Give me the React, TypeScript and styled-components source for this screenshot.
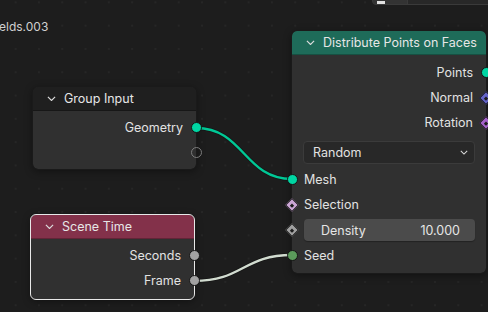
import styled, { createGlobalStyle } from 'styled-components';

const GlobalStyle = createGlobalStyle`
  html, body {
    margin: 0;
    padding: 0;
    background: #1d1d1d;
  }
  body {
    font-family: Inter, "Noto Sans", sans-serif;
  }
`;

const Canvas = styled.div`
  position: relative;
  width: 488px;
  height: 312px;
  overflow: hidden;
  background-color: #1d1d1d;
  background-image: radial-gradient(circle, #262626 1px, transparent 1.2px);
  background-size: 23.3px 23.3px;
  background-position: 4px 14px;
`;

const TopBar = styled.div`
  position: absolute;
  left: 372px;
  top: -6px;
  width: 130px;
  height: 9px;
  background: #282828;
  border: 1px solid #3a3a3a;
  border-radius: 4px;
  display: flex;
`;

const TopBarButton = styled.div`
  width: 30px;
  height: 100%;
  background: #333;
  border-right: 1px solid #3a3a3a;
  display: flex;
  align-items: flex-end;
  padding-left: 4px;
  &::after {
    content: '';
    width: 8px;
    height: 3px;
    background: #e0e0e0;
  }
`;

const TreeName = styled.div`
  position: absolute;
  left: -1px;
  top: 19px;
  font-size: 12px;
  color: #d0d0d0;
`;

const Links = styled.svg`
  position: absolute;
  left: 0;
  top: 0;
  width: 488px;
  height: 312px;
  pointer-events: none;
`;

const Node = styled.div<{ $x: number; $y: number; $w: number; $selected?: boolean }>`
  position: absolute;
  left: ${(p) => p.$x}px;
  top: ${(p) => p.$y}px;
  width: ${(p) => p.$w}px;
  background: #303030;
  border-radius: 5px;
  box-shadow: 0 2px 8px rgba(0, 0, 0, 0.45);
  outline: ${(p) => (p.$selected ? '1px solid #e8e8e8' : '1px solid #1a1a1a')};
  color: #e2e2e2;
  font-size: 12.5px;
`;

const Header = styled.div<{ $color: string }>`
  height: 23px;
  display: flex;
  align-items: center;
  gap: 8px;
  padding-left: 14px;
  background: ${(p) => p.$color};
  border-radius: 5px 5px 0 0;
  color: #e6e6e6;
  font-size: 12.5px;
  border-bottom: 1px solid rgba(0, 0, 0, 0.25);
`;

const Body = styled.div<{ $top?: number; $bottom?: number }>`
  padding: ${(p) => p.$top ?? 5}px 11px ${(p) => p.$bottom ?? 4}px 11px;
  display: flex;
  flex-direction: column;
`;

const Row = styled.div<{ $align: 'left' | 'right'; $h?: number }>`
  position: relative;
  height: ${(p) => p.$h ?? 25}px;
  display: flex;
  align-items: center;
  justify-content: ${(p) => (p.$align === 'right' ? 'flex-end' : 'flex-start')};
  padding: ${(p) => (p.$align === 'right' ? '0 2px 0 0' : '0 0 0 1px')};
`;

const Socket = styled.span<{ $side: 'left' | 'right'; $color: string; $hollow?: boolean }>`
  position: absolute;
  top: 50%;
  ${(p) => p.$side}: -16.5px;
  width: 11px;
  height: 11px;
  margin-top: -5.5px;
  border-radius: 50%;
  box-sizing: border-box;
  background: ${(p) => (p.$hollow ? 'transparent' : p.$color)};
  border: ${(p) => (p.$hollow ? `1.5px solid ${p.$color}` : '1px solid #151515')};
`;

const Diamond = styled.span<{ $side: 'left' | 'right'; $color: string }>`
  position: absolute;
  top: 50%;
  ${(p) => p.$side}: -16px;
  width: 10px;
  height: 10px;
  margin-top: -5px;
  transform: rotate(45deg);
  box-sizing: border-box;
  background: ${(p) => p.$color};
  border: 1px solid #151515;
  &::after {
    content: '';
    position: absolute;
    left: 2.5px;
    top: 2.5px;
    width: 3px;
    height: 3px;
    background: #1c1c1c;
  }
`;

const Dropdown = styled.div`
  height: 21px;
  margin: 6px 0 3px 0;
  display: flex;
  align-items: center;
  justify-content: space-between;
  padding: 0 6px 0 9px;
  background: #282828;
  border: 1px solid #3b3b3b;
  border-radius: 4px;
  color: #e2e2e2;
`;

const Field = styled.div`
  width: 100%;
  height: 22px;
  display: flex;
  align-items: center;
  justify-content: space-between;
  padding: 0 15px 0 17px;
  box-sizing: border-box;
  background: #4b4b4b;
  border-radius: 4px;
  box-shadow: 0 1px 1px rgba(0, 0, 0, 0.3);
  color: #e6e6e6;
`;

const Chevron = ({ size = 9 }: { size?: number }) => (
  <svg width={size} height={size * 0.6} viewBox="0 0 10 6">
    <path d="M1 1 L5 5 L9 1" stroke="#dcdcdc" strokeWidth="1.3" fill="none" />
  </svg>
);

export default function App() {
  return (
    <Canvas>
      <GlobalStyle />
      <TopBar>
        <TopBarButton />
      </TopBar>
      <TreeName>elds.003</TreeName>

      <Links viewBox="0 0 488 312">
        <path d="M196 128 C 244 128, 244 179, 292 179" stroke="#101010" strokeWidth="4" fill="none" opacity="0.5" />
        <path d="M196 128 C 244 128, 244 179, 292 179" stroke="#00c896" strokeWidth="2.4" fill="none" />
        <path d="M194 281 C 243 281, 243 255, 292 255" stroke="#101010" strokeWidth="4" fill="none" opacity="0.5" />
        <path d="M194 281 C 243 281, 243 255, 292 255" stroke="#d2dcd0" strokeWidth="2.4" fill="none" />
      </Links>

      <Node $x={33} $y={87} $w={163}>
        <Header $color="#1f1f1f">
          <Chevron />
          Group Input
        </Header>
        <Body $top={4} $bottom={4}>
          <Row $align="right">
            Geometry
            <Socket $side="right" $color="#00d6a3" />
          </Row>
          <Row $align="right">
            <Socket $side="right" $color="#7c7c7c" $hollow />
          </Row>
        </Body>
      </Node>

      <Node $x={31} $y={215} $w={163} $selected>
        <Header $color="#83314a">
          <Chevron />
          Scene Time
        </Header>
        <Body $top={4} $bottom={6}>
          <Row $align="right">
            Seconds
            <Socket $side="right" $color="#a1a1a1" />
          </Row>
          <Row $align="right">
            Frame
            <Socket $side="right" $color="#a1a1a1" />
          </Row>
        </Body>
      </Node>

      <Node $x={292} $y={31} $w={194}>
        <Header $color="#1e6b59">
          <Chevron />
          Distribute Points on Faces
        </Header>
        <Body $top={5} $bottom={5}>
          <Row $align="right">
            Points
            <Socket $side="right" $color="#00d6a3" />
          </Row>
          <Row $align="right">
            Normal
            <Diamond $side="right" $color="#6363c7" />
          </Row>
          <Row $align="right">
            Rotation
            <Diamond $side="right" $color="#a461c9" />
          </Row>
          <Dropdown>
            Random
            <Chevron size={8} />
          </Dropdown>
          <Row $align="left">
            Mesh
            <Socket $side="left" $color="#00d6a3" />
          </Row>
          <Row $align="left">
            Selection
            <Diamond $side="left" $color="#cca6d6" />
          </Row>
          <Row $align="left" $h={26}>
            <Field>
              <span>Density</span>
              <span>10.000</span>
            </Field>
            <Diamond $side="left" $color="#a1a1a1" />
          </Row>
          <Row $align="left">
            Seed
            <Socket $side="left" $color="#5b9b5b" />
          </Row>
        </Body>
      </Node>
    </Canvas>
  );
}
